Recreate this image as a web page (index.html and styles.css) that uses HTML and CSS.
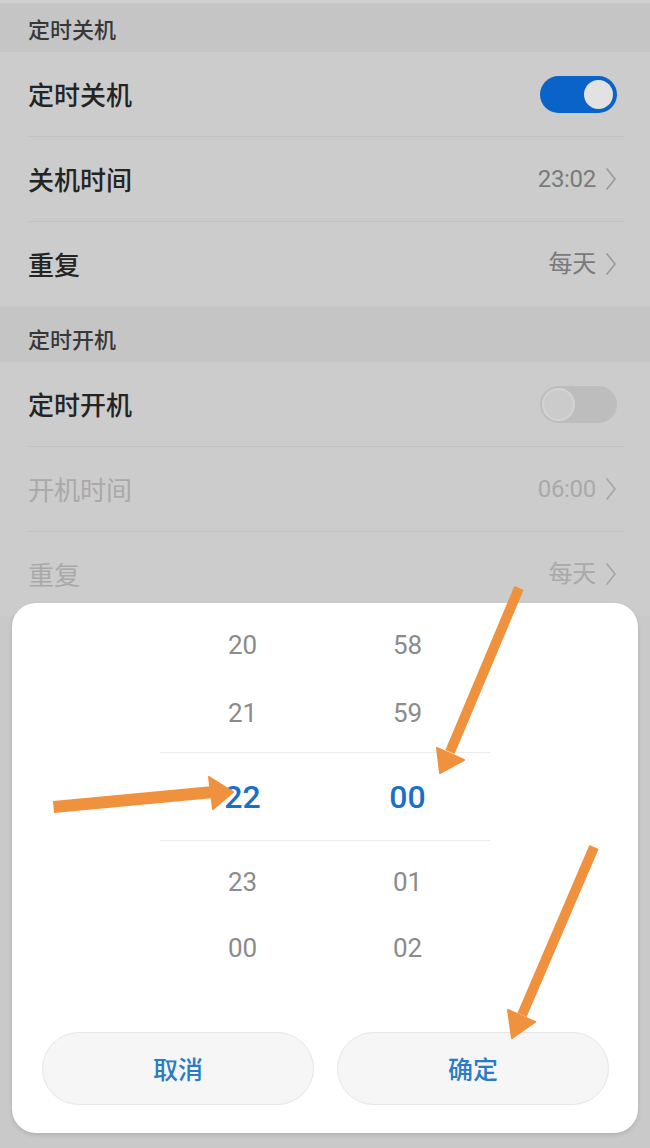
FILE: index.html
```html
<!DOCTYPE html>
<html lang="zh-CN">
<head>
<meta charset="utf-8">
<title>定时开关机</title>
<link rel="stylesheet" href="styles.css">
</head>
<body>
<div class="screen">
  <div class="group-title first">定时关机</div>
  <div class="row">
    <span class="label">定时关机</span>
    <span class="switch on"><span class="knob"></span></span>
  </div>
  <div class="divider"></div>
  <div class="row">
    <span class="label">关机时间</span>
    <span class="value">23:02<svg class="chev" viewBox="0 0 12 24" width="12" height="24"><polyline points="2,2 10,12 2,22"/></svg></span>
  </div>
  <div class="divider"></div>
  <div class="row">
    <span class="label">重复</span>
    <span class="value">每天<svg class="chev" viewBox="0 0 12 24" width="12" height="24"><polyline points="2,2 10,12 2,22"/></svg></span>
  </div>

  <div class="group-title second">定时开机</div>
  <div class="row">
    <span class="label">定时开机</span>
    <span class="switch off"><span class="knob"></span></span>
  </div>
  <div class="divider"></div>
  <div class="row disabled">
    <span class="label">开机时间</span>
    <span class="value">06:00<svg class="chev" viewBox="0 0 12 24" width="12" height="24"><polyline points="2,2 10,12 2,22"/></svg></span>
  </div>
  <div class="divider"></div>
  <div class="row disabled">
    <span class="label">重复</span>
    <span class="value">每天<svg class="chev" viewBox="0 0 12 24" width="12" height="24"><polyline points="2,2 10,12 2,22"/></svg></span>
  </div>
</div>

<div class="sheet">
  <div class="picker">
    <div class="prow"><span class="cell">20</span><span class="cell">58</span></div>
    <div class="prow"><span class="cell">21</span><span class="cell">59</span></div>
    <div class="prow sel"><span class="cell">22</span><span class="cell">00</span></div>
    <div class="prow after"><span class="cell">23</span><span class="cell">01</span></div>
    <div class="prow low"><span class="cell">00</span><span class="cell">02</span></div>
  </div>
  <div class="actions">
    <button class="btn">取消</button>
    <button class="btn">确定</button>
  </div>
</div>

<svg class="marks" viewBox="0 0 650 1148" width="650" height="1148">
  <g fill="#f0913e" stroke="#f0913e">
    <polygon points="53,801 213,786 214,798 54,813" stroke="none"/>
    <polygon points="209,777 233,792 213,809" stroke-linejoin="round" stroke-width="2"/>
    <line x1="519" y1="588" x2="450" y2="752" stroke-width="10"/>
    <polygon points="437,748 464,760 440,773" stroke-linejoin="round" stroke-width="2"/>
    <line x1="594" y1="847" x2="522" y2="1015" stroke-width="10"/>
    <polygon points="508,1010 535,1022 512,1038" stroke-linejoin="round" stroke-width="2"/>
  </g>
</svg>
</body>
</html>
```

FILE: styles.css
```css
* { box-sizing: border-box; }

html, body {
  margin: 0;
  padding: 0;
}

body {
  width: 650px;
  height: 1148px;
  overflow: hidden;
  position: relative;
  background: #c9c9c9;
  font-family: "Noto Sans CJK SC", "Roboto", sans-serif;
}

.screen {
  background: #cccccc;
}

.group-title {
  background: #c5c5c5;
  color: #383838;
  font-size: 22px;
  font-weight: 500;
  padding-left: 28px;
  display: flex;
  align-items: center;
  line-height: 1;
}

.group-title.first {
  height: 52px;
  padding-top: 0;
  border-top: 3px solid #d0d0d0;
}

.group-title.second {
  height: 56px;
  padding-top: 8px;
}

.row {
  height: 84px;
  display: flex;
  align-items: center;
  justify-content: space-between;
  padding: 0 33px 0 28px;
}

.label {
  font-size: 26px;
  font-weight: 500;
  color: #242424;
  line-height: 1;
}

.value {
  display: flex;
  align-items: center;
  gap: 9px;
  font-family: "Roboto", "Noto Sans CJK SC", sans-serif;
  font-size: 24px;
  color: #7a7a7a;
  line-height: 1;
  letter-spacing: -0.3px;
}

.chev {
  display: block;
  fill: none;
  stroke: #9c9c9c;
  stroke-width: 1.8;
  stroke-linecap: round;
  stroke-linejoin: round;
}

.row.disabled .label,
.row.disabled .value {
  color: #a9a9a9;
  font-weight: 400;
}

.row.disabled .chev {
  stroke: #a6a6a6;
}

.divider {
  height: 1px;
  background: #c2c2c2;
  margin: 0 25px 0 28px;
}

.switch {
  width: 77px;
  height: 37px;
  border-radius: 19px;
  display: flex;
  align-items: center;
  padding: 0 4px;
}

.switch.on {
  background: #0a63c9;
  justify-content: flex-end;
}

.switch.off {
  background: #bdbdbd;
  justify-content: flex-start;
  padding: 0 2px;
}

.switch .knob {
  width: 29px;
  height: 29px;
  border-radius: 50%;
  background: #e2e2e2;
}

.switch.off .knob {
  width: 33px;
  height: 33px;
  background: #cbcbcb;
  border: 2px solid #d3d3d3;
}

/* bottom sheet overlay */
.sheet {
  position: absolute;
  left: 12px;
  top: 603px;
  width: 626px;
  height: 530px;
  background: #ffffff;
  border-radius: 24px;
  box-shadow: 0 2px 4px rgba(0, 0, 0, 0.12);
  padding: 8px 29px 28px 30px;
  display: flex;
  flex-direction: column;
}

.picker {
  width: 330px;
  margin-left: 118px;
  display: flex;
  flex-direction: column;
}

.prow {
  height: 68px;
  display: grid;
  grid-template-columns: 165px 165px;
  align-items: center;
}

.cell {
  text-align: center;
  font-family: "Roboto", sans-serif;
  font-size: 26px;
  color: #8b8b8b;
  line-height: 1;
}

.prow.sel {
  height: 89px;
  margin-top: 5px;
  border-top: 1px solid #ececec;
  border-bottom: 1px solid #ececec;
}

.prow.sel .cell {
  font-size: 32px;
  font-weight: 500;
  color: #1a6fc6;
}

.prow.after {
  margin-top: 8px;
  height: 66px;
}

.prow.low {
  height: 66px;
}

.actions {
  margin-top: auto;
  display: flex;
  gap: 23px;
}

.btn {
  flex: 1;
  height: 73px;
  border-radius: 37px;
  background: #f6f6f6;
  border: 1px solid #e6e6e6;
  font-family: "Noto Sans CJK SC", sans-serif;
  font-size: 25px;
  font-weight: 500;
  color: #2b7bc3;
  padding: 0;
  line-height: 1;
}

.marks {
  position: absolute;
  left: 0;
  top: 0;
  pointer-events: none;
}
```
